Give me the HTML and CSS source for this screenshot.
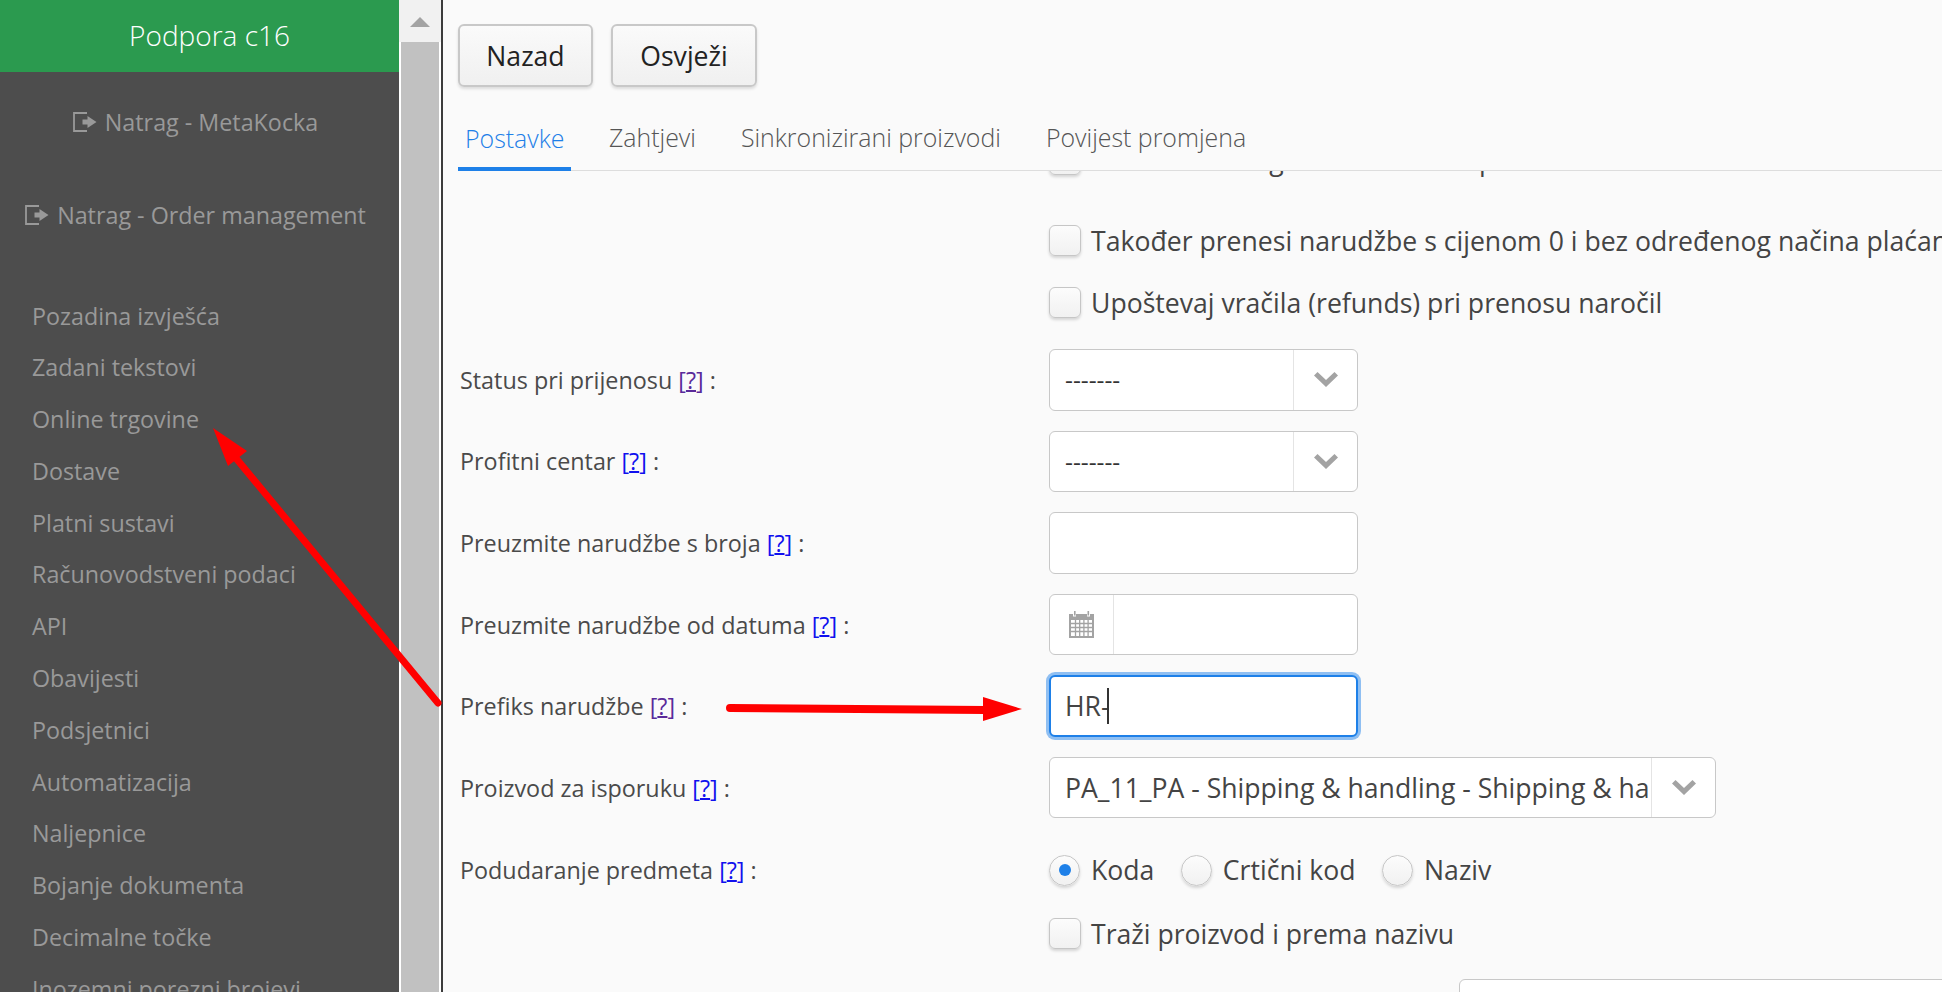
FILE: index.html
```html
<!DOCTYPE html>
<html lang="hr">
<head>
<meta charset="utf-8">
<title>Podpora c16</title>
<link rel="stylesheet" href="styles.css">
</head>
<body>
<div class="page">
  <aside class="sidebar">
    <div class="brand">Podpora c16</div>
    <a class="back back-first"><svg class="back-icon" viewBox="0 0 24 20"><path d="M14 1H1v18h13" fill="none" stroke="currentColor" stroke-width="1.800"/><path d="M9.500 7.500h5V4l9 6-9 6v-3.500h-5z" fill="currentColor"/></svg> Natrag - MetaKocka</a>
    <a class="back"><svg class="back-icon" viewBox="0 0 24 20"><path d="M14 1H1v18h13" fill="none" stroke="currentColor" stroke-width="1.800"/><path d="M9.500 7.500h5V4l9 6-9 6v-3.500h-5z" fill="currentColor"/></svg> Natrag - Order management</a>
    <ul class="menu">
      <li>Pozadina izvješća</li>
      <li>Zadani tekstovi</li>
      <li>Online trgovine</li>
      <li>Dostave</li>
      <li>Platni sustavi</li>
      <li>Računovodstveni podaci</li>
      <li>API</li>
      <li>Obavijesti</li>
      <li>Podsjetnici</li>
      <li>Automatizacija</li>
      <li>Naljepnice</li>
      <li>Bojanje dokumenta</li>
      <li>Decimalne točke</li>
      <li>Inozemni porezni brojevi</li>
    </ul>
  </aside>
  <div class="scrollbar">
    <div class="scroll-btn"><span class="scroll-up"></span></div>
    <div class="scroll-thumb"></div>
  </div>
  <main class="main">
    <div class="actions">
      <button class="btn btn-back">Nazad</button>
      <button class="btn btn-refresh">Osvježi</button>
    </div>
    <nav class="tabs">
      <a class="tab tab-active">Postavke</a>
      <a class="tab">Zahtjevi</a>
      <a class="tab">Sinkronizirani proizvodi</a>
      <a class="tab">Povijest promjena</a>
    </nav>
    <form class="form">
      <div class="row row-clipped"><div></div><label class="check"><span class="box"></span>Zatvoreni nalog za sve račune i pri uvozu</label></div>
      <div class="row row-gap-lg"><div></div><label class="check"><span class="box"></span>Također prenesi narudžbe s cijenom 0 i bez određenog načina plaćanja</label></div>
      <div class="row row-gap-md"><div></div><label class="check"><span class="box"></span>Upoštevaj vračila (refunds) pri prenosu naročil</label></div>

      <div class="row row-field row-first-field">
        <div class="label">Status pri prijenosu <a class="help help-visited">[<u>?</u>]</a> :</div>
        <div class="control control-sm">
          <span class="value value-dash">-------</span>
          <span class="addon"><svg class="chevron" viewBox="0 0 24 15"><path d="M0 3.500 3.500 0 12 8l8.500-8L24 3.500 12 15z" fill="currentColor"/></svg></span>
        </div>
      </div>
      <div class="row row-field">
        <div class="label">Profitni centar <a class="help">[<u>?</u>]</a> :</div>
        <div class="control control-sm">
          <span class="value value-dash">-------</span>
          <span class="addon"><svg class="chevron" viewBox="0 0 24 15"><path d="M0 3.500 3.500 0 12 8l8.500-8L24 3.500 12 15z" fill="currentColor"/></svg></span>
        </div>
      </div>
      <div class="row row-field">
        <div class="label">Preuzmite narudžbe s broja <a class="help">[<u>?</u>]</a> :</div>
        <div class="control control-sm"></div>
      </div>
      <div class="row row-field">
        <div class="label">Preuzmite narudžbe od datuma <a class="help">[<u>?</u>]</a> :</div>
        <div class="control control-sm">
          <span class="addon-left"><svg class="calendar" viewBox="0 0 25 27"><path d="M0 3h4v2.500h3V3h11v2.500h3V3h4v24H0z" fill="currentColor"/><path d="M5 0h1.600v4.500H5zM18.500 0h1.600v4.500h-1.600z" fill="currentColor"/><path d="M2 9h21v16H2z" fill="#fff"/><path d="M2 12.500h21M2 16.500h21M2 20.500h21M6.500 9v16M10.700 9v16M14.900 9v16M19.100 9v16" stroke="currentColor" stroke-width="1.300"/></svg></span>
        </div>
      </div>
      <div class="row row-field">
        <div class="label">Prefiks narudžbe <a class="help help-visited">[<u>?</u>]</a> :</div>
        <div class="control control-sm control-focus">
          <span class="value">HR-</span><span class="caret"></span>
        </div>
      </div>
      <div class="row row-field">
        <div class="label">Proizvod za isporuku <a class="help">[<u>?</u>]</a> :</div>
        <div class="control control-lg">
          <span class="value value-clip">PA_11_PA - Shipping &amp; handling - Shipping &amp; handling</span>
          <span class="addon"><svg class="chevron" viewBox="0 0 24 15"><path d="M0 3.500 3.500 0 12 8l8.500-8L24 3.500 12 15z" fill="currentColor"/></svg></span>
        </div>
      </div>
      <div class="row row-radio">
        <div class="label">Podudaranje predmeta <a class="help">[<u>?</u>]</a> :</div>
        <div class="radios">
          <label class="radio"><span class="dot dot-on"></span>Koda</label>
          <label class="radio"><span class="dot"></span>Crtični kod</label>
          <label class="radio"><span class="dot"></span>Naziv</label>
        </div>
      </div>
      <div class="row row-search"><div></div><label class="check"><span class="box"></span>Traži proizvod i prema nazivu</label></div>
      <div class="row row-bottom"><div></div><div class="bottom-field"></div></div>
    </form>
  </main>
</div>
<svg class="annotations" viewBox="0 0 1942 992">
  <path d="M438 703 235 457" fill="none" stroke="#ff0000" stroke-width="7" stroke-linecap="round"/>
  <path d="M213 428 247 451 228 466z" fill="#ff0000"/>
  <path d="M730 708 985 710" fill="none" stroke="#ff0000" stroke-width="8" stroke-linecap="round"/>
  <path d="M983 697 1022 709 983 721z" fill="#ff0000"/>
</svg>
</body>
</html>
```

FILE: styles.css
```css
* { box-sizing: border-box; }
html, body { margin: 0; height: 100%; overflow: hidden; }
body { font-family: "Open Sans", sans-serif; background: #fafafa; color: #444; }
.page { display: flex; height: 992px; width: 1942px; overflow: hidden; }

.sidebar { width: 399px; flex: none; background: #4d4d4d; color: #999; overflow: hidden; }
.brand { height: 72px; background: #2b9a4f; color: #fff; font-size: 28px; font-weight: 300; line-height: 71px; text-align: center; padding-left: 20px; }
.back { display: block; text-align: center; font-size: 23.300px; line-height: 40px; margin-top: 53px; padding-right: 8px; white-space: nowrap; }
.back-first { margin-top: 30px; }
.back-icon { width: 24px; height: 20px; vertical-align: -1px; margin-right: 2px; }
.menu { list-style: none; margin: 55.500px 0 0; padding: 0 0 0 32px; }
.menu li { height: 51.800px; line-height: 51.800px; font-size: 23.300px; white-space: nowrap; }

.scrollbar { width: 44px; flex: none; background: #fff; padding: 0 2px; border-right: 2px solid #3c3c3c; }
.scroll-btn { height: 42px; background: #f1f1f1; margin: 0 -2px; padding-top: 17px; display: flex; justify-content: center; }
.scroll-up { width: 0; height: 0; border-left: 10px solid transparent; border-right: 10px solid transparent; border-bottom: 10px solid #a3a3a3; }
.scroll-thumb { height: 950px; background: #c1c1c1; }

.main { flex: 1; min-width: 0; background: #fafafa; display: flex; flex-direction: column; padding-left: 15px; }
.actions { display: flex; gap: 18px; padding-top: 24px; height: 87px; }
.btn { height: 63px; font-family: inherit; font-size: 26.600px; color: #222; background: linear-gradient(#fafafa, #f0f0f0); border: 2px solid #c8c8c8; border-radius: 6px; box-shadow: 0 2px 3px rgba(0,0,0,.12); padding: 0; }
.btn-back { width: 135px; }
.btn-refresh { width: 146px; }

.tabs { display: flex; height: 84px; border-bottom: 1px solid #ddd; align-items: flex-end; flex: none; }
.tab { display: block; height: 84px; line-height: 102px; padding: 0 8px; margin-right: 29px; font-size: 24.900px; font-weight: 300; color: #555; white-space: nowrap; }
.tab-active { color: #1e80e8; border-bottom: 4px solid #1e80e8; margin-bottom: -1px; width: 113px; margin-right: 30px; padding-left: 7px; }

.form { flex: 1; min-height: 0; overflow: hidden; padding-left: 2px; }
.row { display: grid; grid-template-columns: 589px 1fr; align-items: center; white-space: nowrap; }
.row-clipped { margin-top: -27px; }
.row-gap-lg { margin-top: 50px; }
.row-gap-md { margin-top: 31px; }
.row-field { margin-top: 20.100px; }
.row-first-field { margin-top: 31px; }
.row-radio { margin-top: 36px; }
.row-search { margin-top: 32px; }
.row-bottom { margin-top: 30px; }

.label { font-size: 23.350px; color: #4a4a4a; }
.help { color: #1010ee; }
.help-visited { color: #5a2a9a; }
.help u { text-decoration-thickness: 2px; }

.check { display: flex; align-items: center; gap: 10px; height: 31px; font-size: 26.600px; color: #444; }
.box { width: 32px; height: 31px; flex: none; border: 1px solid #c6c6c6; border-radius: 6px; background: linear-gradient(#fcfcfc, #f1f1f1); box-shadow: 0 2px 3px rgba(0,0,0,.15); }

.control { height: 61.500px; display: flex; align-items: center; background: #fff; border: 1px solid #c8c8c8; border-radius: 6px; font-size: 26.600px; color: #444; }
.control-sm { width: 309px; }
.control-lg { width: 667px; }
.control-focus { border: 2px solid #1e80e8; box-shadow: 0 0 0 3px #8fbff2; }
.value { padding-left: 15px; overflow: hidden; white-space: nowrap; }
.control-focus .value { padding-left: 14px; }
.value-dash { flex: 1; font-size: 24.500px; color: #333; }
.value-clip { flex: 1; min-width: 0; padding-right: 3px; }
.caret { width: 2px; height: 36px; background: #333; margin-left: -3px; }
.addon { width: 64px; height: 100%; flex: none; border-left: 1px solid #e4e4e4; display: flex; align-items: center; justify-content: center; color: #a3a3a3; }
.addon-left { width: 64px; height: 100%; flex: none; border-right: 1px solid #e4e4e4; display: flex; align-items: center; justify-content: center; color: #a3a3a3; }
.chevron { width: 24px; height: 15px; }
.calendar { width: 25px; height: 27px; }

.radios { display: flex; }
.radio { display: flex; align-items: center; gap: 11px; height: 31px; font-size: 26.600px; margin-right: 26.500px; }
.dot { width: 31px; height: 31px; flex: none; border: 1px solid #c6c6c6; border-radius: 50%; background: linear-gradient(#fcfcfc, #f1f1f1); box-shadow: 0 2px 3px rgba(0,0,0,.15); display: flex; align-items: center; justify-content: center; }
.dot-on::after { content: ""; width: 12px; height: 12px; border-radius: 50%; background: #1e80e8; }

.bottom-field { margin-left: 410px; width: 600px; height: 60px; background: #fff; border: 1px solid #c8c8c8; border-radius: 6px; }

.annotations { position: absolute; left: 0; top: 0; width: 1942px; height: 992px; pointer-events: none; }
```
